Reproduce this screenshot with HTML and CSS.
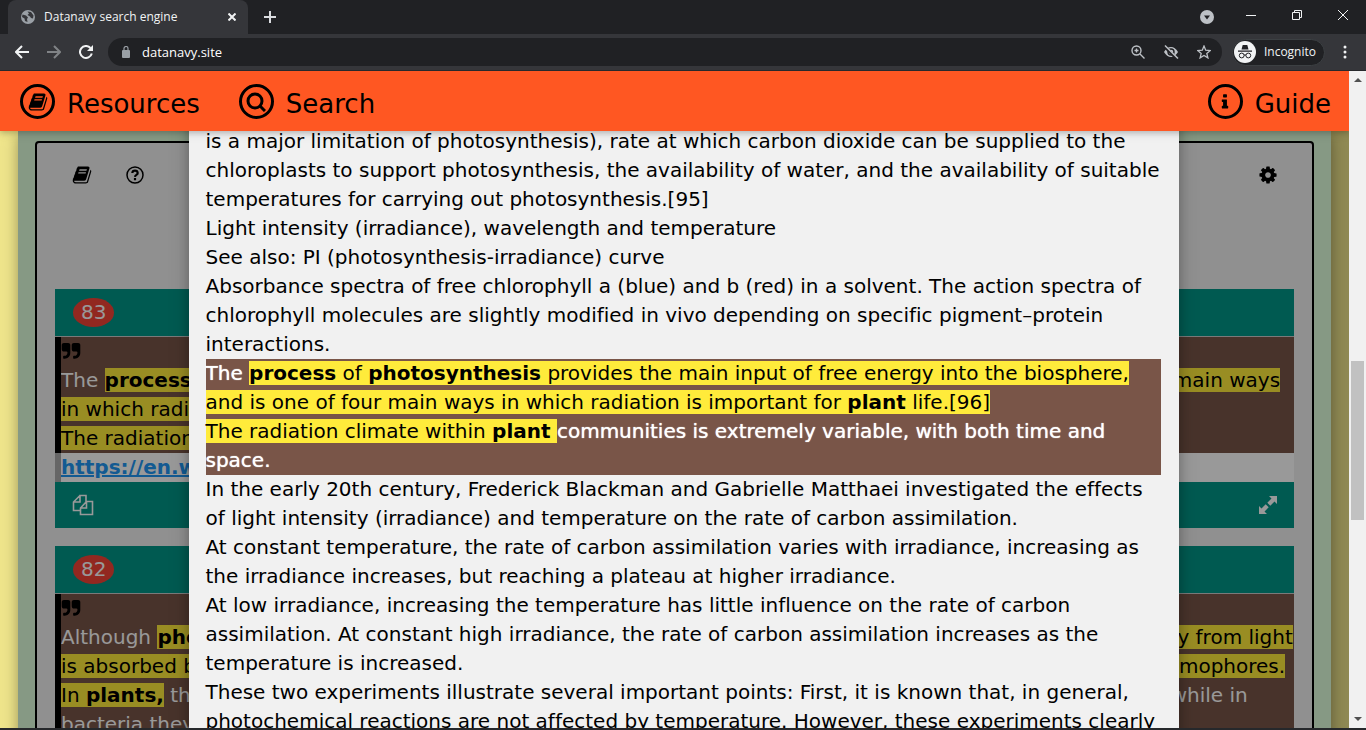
FILE: index.html
```html
<!DOCTYPE html>
<html lang="en">
<head>
<meta charset="utf-8">
<title>Datanavy search engine</title>
<link rel="stylesheet" href="styles.css">
</head>
<body>
<svg class="defs" aria-hidden="true">
  <symbol id="book" viewBox="0 0 1792 1792"><path d="M1703 478q40 57 18 129l-275 906q-19 64-76.5 107.5t-122.5 43.5h-923q-77 0-148.5-53.5t-99.5-131.5q-24-67-2-127 0-4 3-27t4-37q1-8-3-21.5t-3-19.5q2-11 8-21t16.5-23.5 16.5-23.5q23-38 45-91.5t30-91.500q3-10 .5-30t-.5-28q3-11 17-28t17-23q21-36 42-92t25-90q1-9-2.500-32t.5-28q4-13 22-30.500t22-22.500q19-26 42.500-84.500t27.500-96.500q1-8-3-25.500t-2-26.500q2-8 9-18t18-23 17-21q8-12 16.500-30.500t15-35 16-36 19.500-32 26.500-23.500 36-11.500 47.500 5.500l-1 3q38-9 51-9h761q74 0 114 56t18 130l-274 906q-36 119-71.500 153.500t-128.500 34.500h-869q-27 0-38 15-11 16-1 43 24 70 144 70h923q29 0 56-15.500t35-41.500l300-987q7-22 5-57 38 15 59 43zm-1064 2q-4 13 2 22.500t20 9.500h608q13 0 25.500-9.500t16.500-22.500l21-64q4-13-2-22.500t-20-9.500h-608q-13 0-25.500 9.500t-16.500 22.500zm-83 256q-4 13 2 22.500t20 9.500h608q13 0 25.500-9.500t16.500-22.500l21-64q4-13-2-22.500t-20-9.500h-608q-13 0-25.500 9.500t-16.500 22.500z"/></symbol>
  <symbol id="quote" viewBox="0 0 1792 1792"><path id="q1" d="M832 320v704q0 104-40.500 198.500t-109.500 163.500-163.500 109.500-198.500 40.500h-64q-26 0-45-19t-19-45v-128q0-26 19-45t45-19h64q106 0 181-75t75-181v-32q0-40-28-68t-68-28h-224q-80 0-136-56t-56-136v-384q0-80 56-136t136-56h384q80 0 136 56t56 136z"/><use href="#q1" x="896"/></symbol>
  <symbol id="copy" viewBox="0 0 22 22"><path d="M8 5V1.500h6V8M8 1.500 1.500 8v8.500H8M1.500 8H8V2M14.500 7.500h6v13H8.500V14zM8.500 14h6V7.500" fill="none" stroke="currentColor" stroke-width="1.600"/></symbol>
  <symbol id="expand" viewBox="0 0 18 18"><path d="M10 0h8v8l-2.500-2.500-4.200 4.200-3-3 4.200-4.200zM8 18H0v-8l2.500 2.500 4.200-4.200 3 3-4.200 4.200z"/></symbol>
</svg>

<header class="browser">
  <div class="tabs">
    <div class="tab">
      <svg class="i14" viewBox="0 0 14 14"><circle cx="7" cy="7" r="7" fill="#9aa0a6"/><path d="M1.500 4.500 5 5.500l2 2-1 1.500.5 3L4 11 3.500 8.500 1 7zM6.500 1.500 10 2l2.500 3.500-.5 3-2-.500-1-1.500-2.500-1.500L8 3.500z" fill="#35363a"/></svg>
      <span class="tab-title">Datanavy search engine</span>
      <button class="plain" aria-label="Close tab"><svg class="i8" viewBox="0 0 8 8"><path d="m.5.500 7 7m0-7-7 7" class="ln"/></svg></button>
    </div>
    <button class="plain new" aria-label="New tab"><svg class="i12" viewBox="0 0 12 12"><path d="M6 0v12M0 6h12" class="ln"/></svg></button>
    <div class="window-buttons">
      <button class="plain tab-search" aria-label="Tab search"><svg class="i14" viewBox="0 0 14 14"><circle cx="7" cy="7" r="7" fill="#bdc1c6"/><path d="M4 5.500h6L7 9.500z" fill="#202124"/></svg></button>
      <button class="plain" aria-label="Minimize"><svg class="i10" viewBox="0 0 10 10"><path d="M0 5.500h10" class="thin"/></svg></button>
      <button class="plain" aria-label="Restore"><svg class="i10" viewBox="0 0 10 10"><path d="M.5 2.500h7v7h-7zM2.500 2V.5h7v7H8" class="thin"/></svg></button>
      <button class="plain" aria-label="Close window"><svg class="i10" viewBox="0 0 10 10"><path d="m0 0 10 10m0-10L0 10" class="thin"/></svg></button>
    </div>
  </div>
  <div class="toolbar">
    <button class="plain" aria-label="Back"><svg class="i14" viewBox="0 0 14 14"><path d="M14 7H1.500M7 1 1 7l6 6" class="ln"/></svg></button>
    <button class="plain dim" aria-label="Forward"><svg class="i14" viewBox="0 0 14 14"><path d="M0 7h12.500M7 1l6 6-6 6" class="ln"/></svg></button>
    <button class="plain" aria-label="Reload"><svg class="i14" viewBox="0 0 14 14"><path d="M12.800 8.500A6 6 0 1 1 11.500 3" class="ln"/><path d="M14 0v6H8z" fill="currentColor"/></svg></button>
    <div class="address">
      <svg class="i12" viewBox="0 0 12 12"><rect x="2" y="4" width="8" height="8" rx="1" fill="#9aa0a6"/><path d="M4 4V2.500a2 2 0 0 1 4 0V4" fill="none" stroke="#9aa0a6" stroke-width="1.200"/></svg>
      <input type="text" value="datanavy.site" aria-label="Address">
      <button class="plain soft" aria-label="Zoom"><svg class="i14" viewBox="0 0 14 14"><circle cx="5.500" cy="5.500" r="4.500" fill="none" stroke="currentColor" stroke-width="1.400"/><path d="m9 9 4.500 4.500M3.500 5.500h4M5.500 3.500v4" stroke="currentColor" stroke-width="1.400"/></svg></button>
      <button class="plain soft" aria-label="Cookies blocked"><svg class="i16" viewBox="0 0 16 16"><path d="M1 8q3-5 7-5t7 5q-3 5-7 5T1 8z" fill="currentColor"/><circle cx="8" cy="8" r="3" fill="none" stroke="#202124" stroke-width="1.400"/><path d="m1 2 13 13" stroke="#202124" stroke-width="3"/><path d="m2 1.500 13 13" stroke="currentColor" stroke-width="1.500"/></svg></button>
      <button class="plain soft" aria-label="Bookmark"><svg class="i14" viewBox="0 0 14 14"><path d="m7 1 1.700 4.200 4.600.3-3.500 2.900 1.100 4.500L7 10.500l-3.900 2.400 1.100-4.500L.7 5.500l4.600-.3z" fill="none" stroke="currentColor" stroke-width="1.300"/></svg></button>
    </div>
    <button class="profile"><svg class="i22" viewBox="0 0 22 22"><circle cx="11" cy="11" r="11" fill="#f1f3f4"/><path d="M7.500 8.500 8.700 4h4.600l1.200 4.500zM4 9.500h14v1.200H4z" fill="#202124"/><circle cx="7.700" cy="14.500" r="2.400" fill="none" stroke="#202124"/><circle cx="14.300" cy="14.500" r="2.400" fill="none" stroke="#202124"/><path d="M10 14h2" stroke="#202124"/></svg>Incognito</button>
    <button class="plain" aria-label="Menu"><svg class="i14" viewBox="0 0 14 14"><g fill="currentColor"><circle cx="7" cy="2" r="1.500"/><circle cx="7" cy="7" r="1.500"/><circle cx="7" cy="12" r="1.500"/></g></svg></button>
  </div>
</header>

<div class="viewport">
  <div class="page">
    <nav class="topbar">
      <a href="#resources"><span class="ring"><svg class="i20"><use href="#book"/></svg></span>Resources</a>
      <a href="#search"><span class="ring"><svg class="i20" viewBox="0 0 20 20"><circle cx="9" cy="9" r="7" class="lens"/><path d="m14 14 5 5" class="lens"/></svg></span>Search</a>
      <a href="#guide" class="right"><span class="ring"><svg class="i18" viewBox="0 0 1792 1792"><path d="M1216 1344v128q0 26-19 45t-45 19h-512q-26 0-45-19t-19-45v-128q0-26 19-45t45-19h64v-384h-64q-26 0-45-19t-19-45v-128q0-26 19-45t45-19h384q26 0 45 19t19 45v576h64q26 0 45 19t19 45zm-128-1152v192q0 26-19 45t-45 19h-256q-26 0-45-19t-19-45v-192q0-26 19-45t45-19h256q26 0 45 19t19 45z"/></svg></span>Guide</a>
    </nav>

    <main class="content">
      <section class="results">
        <div class="tools">
          <button class="plain" aria-label="Resources"><svg class="i20"><use href="#book"/></svg></button>
          <button class="plain" aria-label="Help"><svg class="i20" viewBox="0 0 20 20"><circle cx="10" cy="10" r="8" fill="none" stroke="currentColor" stroke-width="1.500"/><path d="M7.300 8q.2-2.400 2.700-2.400T12.700 8q0 1.200-1.300 1.900T10 11.800M10 13v2.200" fill="none" stroke="currentColor" stroke-width="2.200"/></svg></button>
          <button class="plain right" aria-label="Settings"><svg class="i20" viewBox="0 0 1792 1792"><path d="M1152 896q0-106-75-181t-181-75-181 75-75 181 75 181 181 75 181-75 75-181zm512-109v222q0 12-8 23t-20 13l-185 28q-19 54-39 91 35 50 107 138 10 12 10 25t-9 23q-27 37-99 108t-94 71q-12 0-26-9l-138-108q-44 23-91 38-16 136-29 186-7 28-36 28h-222q-14 0-24.500-8.500t-11.500-21.500l-28-184q-49-16-90-37l-141 107q-10 9-25 9-14 0-25-11-126-114-165-168-7-10-7-23 0-12 8-23 15-21 51-66.500t54-70.500q-27-50-41-99l-183-27q-13-2-21-12.500t-8-23.500v-222q0-12 8-23t19-13l186-28q14-46 39-92-40-57-107-138-10-12-10-24 0-10 9-23 26-36 98.500-107.500t94.500-71.500q13 0 26 10l138 107q44-23 91-38 16-136 29-186 7-28 36-28h222q14 0 24.500 8.500t11.500 21.500l28 184q49 16 90 37l142-107q9-9 24-9 13 0 25 10 129 119 165 170 7 8 7 22 0 12-8 23-15 21-51 66.500t-54 70.500q26 50 41 98l183 28q13 2 21 12.500t8 23.500z"/></svg></button>
        </div>
        <article class="card">
          <header class="card-head"><span class="badge">83</span></header>
          <blockquote class="quote"><svg class="i20 mark-icon"><use href="#quote"/></svg>The <mark><b>process</b> of <b>photosynthesis</b> provides the main input of free energy into the biosphere, and is one of four main ways<br>in which radiation is important for <b>plant</b> life.[96]</mark><br><mark>The radiation climate within <b>plant</b> </mark>communities is extremely variable, with both time and space.</blockquote>
          <div class="source"><a href="#source">https://en.wikipedia.org/wiki/Photosynthesis</a></div>
          <footer class="card-foot"><button class="plain" aria-label="Copy"><svg class="i22"><use href="#copy"/></svg></button><button class="plain right" aria-label="Expand"><svg class="i18"><use href="#expand"/></svg></button></footer>
        </article>
        <article class="card">
          <header class="card-head"><span class="badge">82</span></header>
          <blockquote class="quote"><svg class="i20 mark-icon"><use href="#quote"/></svg>Although <mark><b>photosynthesis</b> is performed differently by different species, the process always begins when energy from light<br>is absorbed by proteins called reaction centers that contain green chlorophyll, and other colored pigments/chromophores.</mark><br><mark>In <b>plants,</b></mark> these proteins are held inside organelles called chloroplasts, which are most abundant in leaf cells, while in<br>bacteria they are embedded in the plasma membrane.</blockquote>
        </article>
      </section>
    </main>

    <div class="modal">
      <article class="panel" role="dialog" aria-label="Article text">
        <p>is a major limitation of photosynthesis), rate at which carbon dioxide can be supplied to the chloroplasts to support photosynthesis, the availability of water, and the availability of suitable temperatures for carrying out photosynthesis.[95]</p>
        <p>Light intensity (irradiance), wavelength and temperature</p>
        <p>See also: PI (photosynthesis-irradiance) curve</p>
        <p>Absorbance spectra of free chlorophyll a (blue) and b (red) in a solvent. The action spectra of chlorophyll molecules are slightly modified in vivo depending on specific pigment–protein interactions.</p>
        <div class="found">The <mark><b>process</b> of <b>photosynthesis</b> provides the main input of free energy into the biosphere, and is one of four main ways in which radiation is important for <b>plant</b> life.[96]</mark><br><mark>The radiation climate within <b>plant</b> </mark>communities is extremely variable, with both time and space.</div>
        <p>In the early 20th century, Frederick Blackman and Gabrielle Matthaei investigated the effects of light intensity (irradiance) and temperature on the rate of carbon assimilation.</p>
        <p>At constant temperature, the rate of carbon assimilation varies with irradiance, increasing as the irradiance increases, but reaching a plateau at higher irradiance.</p>
        <p>At low irradiance, increasing the temperature has little influence on the rate of carbon assimilation. At constant high irradiance, the rate of carbon assimilation increases as the temperature is increased.</p>
        <p>These two experiments illustrate several important points: First, it is known that, in general, photochemical reactions are not affected by temperature. However, these experiments clearly</p>
      </article>
    </div>
  </div>
  <div class="scrollbar">
    <svg class="i8" viewBox="0 0 8 8"><path d="M0 6h8L4 2z"/></svg>
    <div class="thumb"></div>
    <svg class="i8" viewBox="0 0 8 8"><path d="M0 2h8L4 6z"/></svg>
  </div>
</div>
</body>
</html>
```
FILE: styles.css
```css
* { box-sizing: border-box; }
body {
  margin: 0;
  height: 100vh;
  display: flex;
  flex-direction: column;
  overflow: hidden;
  background: #26282b;
  padding-bottom: 2px;
  font: 20px/29px Verdana, "DejaVu Sans", sans-serif;
  font-variant-ligatures: none;
  color: #000;
}
svg { display: block; flex: none; fill: currentColor; }
.defs { display: none; }
.i8 { width: 8px; height: 8px; }
.i10 { width: 10px; height: 10px; }
.i12 { width: 12px; height: 12px; }
.i14 { width: 14px; height: 14px; }
.i16 { width: 16px; height: 16px; }
.i18 { width: 18px; height: 18px; }
.i20 { width: 20px; height: 20px; }
.i22 { width: 22px; height: 22px; }
.ln { fill: none; stroke: currentColor; stroke-width: 2; }
.thin { fill: none; stroke: currentColor; stroke-width: 1; }
.plain { border: 0; padding: 0; background: none; color: inherit; font: inherit; }
.right { margin-left: auto; }

/* Browser frame */
.browser {
  flex: none;
  color: #f1f3f4;
  background: #202124;
  font: 12px/16px "Noto Sans", "Open Sans", sans-serif;
}
.tabs { display: flex; align-items: center; height: 34px; padding-left: 8px; }
.tab {
  display: flex;
  align-items: center;
  gap: 9px;
  width: 240px;
  height: 34px;
  padding: 0 12px 0 13px;
  border-radius: 8px 8px 0 0;
  background: #35363a;
}
.tab-title { flex: 1; font-family: "Open Sans", sans-serif; }
.new { margin-left: 16px; color: #dadce0; }
.window-buttons { display: flex; align-items: center; gap: 36px; margin-left: auto; padding: 0 18px 4px 0; }
.tab-search { margin-right: -4px; padding-top: 4px; }
.toolbar {
  display: flex;
  align-items: center;
  gap: 18px;
  height: 37px;
  padding: 0 14px 0 15px;
  background: #35363a;
  border-bottom: 1px solid #28292c;
}
.dim { color: #808386; }
.soft { color: #bdc1c6; }
.address {
  flex: 1;
  display: flex;
  align-items: center;
  gap: 18px;
  height: 28px;
  margin-left: -3px;
  margin-right: -8px;
  padding: 0 11px 0 12px;
  border-radius: 14px;
  background: #202124;
}
.address input {
  flex: 1;
  min-width: 0;
  margin-left: -10px;
  border: 0;
  background: none;
  color: #fff;
  font: 13px/18px "Open Sans", "Noto Sans", sans-serif;
}
.profile {
  display: flex;
  align-items: center;
  gap: 8px;
  height: 27px;
  margin-right: -5px;
  padding: 0 8px 0 1px;
  border: 1px solid #3c4043;
  border-radius: 14px;
  background: #202124;
  color: #f1f3f4;
  font: 12px/16px "Open Sans", "Noto Sans", sans-serif;
}

/* Page */
.viewport { flex: 1; min-height: 0; display: flex; }
.page { position: relative; flex: 1; overflow: hidden; background: #f0e68c; }
.topbar {
  position: relative;
  z-index: 3;
  display: flex;
  gap: 39px;
  height: 60px;
  padding: 13px 18px 0 20px;
  background: #ff5722;
  box-shadow: 0 2px 5px rgba(0, 0, 0, .16), 0 2px 10px rgba(0, 0, 0, .12);
}
.topbar a { display: flex; align-items: flex-start; gap: 12px; color: #000; font-size: 26px; line-height: 40px; text-decoration: none; }
.ring {
  display: flex;
  align-items: center;
  justify-content: center;
  width: 35px;
  height: 35px;
  border: 3px solid #000;
  border-radius: 50%;
}
.lens { fill: none; stroke: currentColor; stroke-width: 3; }
.content {
  min-height: 100%;
  margin: 0 18px;
  padding: 10px 17px 0;
  background: #dfffdc;
  box-shadow: 0 4px 10px rgba(0, 0, 0, .2), 0 4px 20px rgba(0, 0, 0, .19);
}
.results {
  padding: 18px;
  border: 2px solid #000;
  border-radius: 4px;
  background: #f1f1f1;
}
.tools { display: flex; gap: 33px; height: 128px; padding: 4px 16px 0 17px; align-items: flex-start; }
.card { margin-bottom: 18px; background: #fff; }
.card-head { display: flex; align-items: center; height: 48px; padding-left: 18px; background: #009688; color: #fff; border-bottom: 1px solid #ccc; }
.badge { padding: 0 8px; border-radius: 50%; background: #f44336; }
.quote { margin: 0; border-left: 6px solid #000; background: #795548; color: #fff; white-space: nowrap; overflow: hidden; }
.mark-icon { height: 29px; color: #000; }
mark { background: #ffeb3b; color: #000; }
.source { border-left: 6px solid #aaa; font-weight: bold; }
.source a { color: #2196f3; }
.card-foot { display: flex; align-items: center; height: 46px; padding: 0 17px; background: #009688; color: #fff; }

/* Article dialog */
.modal {
  position: absolute;
  z-index: 2;
  inset: 0 0 0 18px;
  display: flex;
  justify-content: center;
  background: rgba(0, 0, 0, .4);
}
.panel {
  width: 990px;
  height: max-content;
  padding: 56px 18px 18px 17px;
  background: #f1f1f1;
  box-shadow: 0 4px 10px rgba(0, 0, 0, .2), 0 4px 20px rgba(0, 0, 0, .19);
}
.panel p { margin: 0; }
.found { background: #795548; color: #fff; text-shadow: 0 0 1px #fff; }
.found mark { text-shadow: none; }

.scrollbar { display: flex; flex-direction: column; align-items: center; width: 17px; padding: 5px 0; background: #f1f1f1; color: #505050; }
.thumb { width: 13px; height: 159px; margin: 277px 0 auto; background: #c1c1c1; }
```
